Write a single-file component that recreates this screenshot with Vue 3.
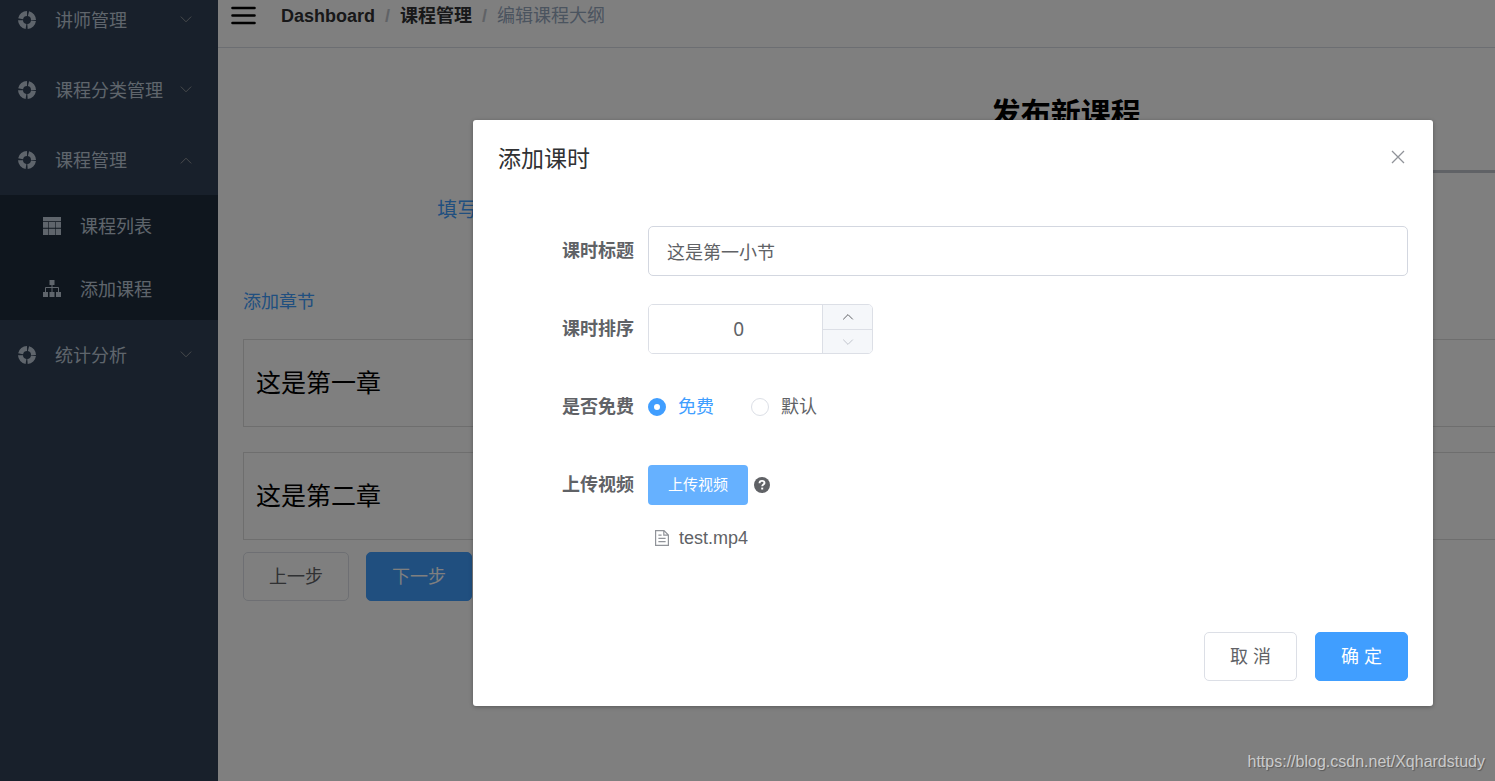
<script setup>
import { ref } from 'vue'

const topMenu = [
  { label: '讲师管理', open: false, children: [] },
  { label: '课程分类管理', open: false, children: [] },
  {
    label: '课程管理',
    open: true,
    children: [
      { label: '课程列表', icon: 'table' },
      { label: '添加课程', icon: 'tree' },
    ],
  },
  { label: '统计分析', open: false, children: [] },
]
const steps = [
  { id: 1, title: '填写课程基本信息', done: true },
  { id: 2, title: '', done: true },
  { id: 3, title: '', done: false },
]
const chapters = ['这是第一章', '这是第二章']

const title = ref('这是第一小节')
const sort = ref(0)
const free = ref('free')
</script>

<template>
  <div class="viewport">
    <div class="page">
      <nav class="sidebar">
        <ul class="menu">
          <li v-for="item in topMenu" :key="item.label">
            <a href="#" class="menu-item">
              <svg class="menu-icon" viewBox="0 0 18 18" aria-hidden="true">
                <circle cx="9" cy="9" r="6.5" fill="none" stroke="currentColor" stroke-width="5" stroke-dasharray="8.61 1.6" stroke-dashoffset="-0.8" />
              </svg>
              <span class="menu-label">{{ item.label }}</span>
              <svg class="menu-arrow" :class="{ up: item.open }" viewBox="0 0 12 12" aria-hidden="true">
                <path d="M0.8 2.6 L6 7.8 L11.2 2.6" fill="none" stroke="currentColor" stroke-width="1" />
              </svg>
            </a>
            <ul v-if="item.children.length" class="submenu">
              <li v-for="child in item.children" :key="child.label">
                <a href="#" class="submenu-item">
                  <svg v-if="child.icon === 'table'" class="menu-icon" viewBox="0 0 18 18" aria-hidden="true">
                    <path fill="currentColor" d="M0 0h18v4.3H0zM0 5h5.4v5.8H0zM6 5h6v5.8H6zM12.6 5H18v5.8h-5.4zM0 11.8h5.4V18H0zM6 11.8h6V18H6zM12.6 11.8H18V18h-5.4z" />
                  </svg>
                  <svg v-else class="menu-icon" viewBox="0 0 18 18" aria-hidden="true">
                    <path fill="currentColor" d="M6.5 0h5v5h-5zM0 12h5v5H0zM6.5 12h5v5h-5zM13 12h5v5h-5z" />
                    <path fill="none" stroke="currentColor" d="M9 5v8M2.5 12V7.5h13V12" />
                  </svg>
                  <span class="menu-label">{{ child.label }}</span>
                </a>
              </li>
            </ul>
          </li>
        </ul>
      </nav>

      <div class="main">
        <header class="navbar">
          <button type="button" class="hamburger" aria-label="菜单">
            <svg viewBox="0 0 26 20" aria-hidden="true">
              <path d="M1.5 2h22M1.5 9.5h22M1.5 17h22" stroke="#000" stroke-width="2.6" stroke-linecap="round" />
            </svg>
          </button>
          <div class="breadcrumb">
            <a href="#">Dashboard</a>
            <span class="sep">/</span>
            <a href="#">课程管理</a>
            <span class="sep">/</span>
            <span class="current">编辑课程大纲</span>
          </div>
        </header>

        <main class="content">
          <h2>发布新课程</h2>
          <ol class="steps">
            <li v-for="step in steps" :key="step.id" :class="{ done: step.done }">
              <span class="step-head"><span class="step-dot"></span></span>
              <span class="step-title">{{ step.title }}</span>
            </li>
          </ol>
          <a href="#" class="add-chapter">添加章节</a>
          <ul class="chapters">
            <li v-for="chapter in chapters" :key="chapter">{{ chapter }}</li>
          </ul>
          <div class="actions">
            <button type="button" class="btn">上一步</button>
            <button type="button" class="btn primary">下一步</button>
          </div>
        </main>
      </div>
    </div>

    <div class="overlay">
      <section class="dialog" role="dialog" aria-labelledby="dialog-title">
        <header class="dialog-header">
          <span id="dialog-title" class="dialog-title">添加课时</span>
          <button type="button" class="close" aria-label="关闭">
            <svg viewBox="0 0 14 14" aria-hidden="true">
              <path d="M1 1L13 13M13 1L1 13" stroke="currentColor" stroke-width="1.3" />
            </svg>
          </button>
        </header>

        <form class="form" @submit.prevent>
          <div class="row">
            <label class="label" for="lesson-title">课时标题</label>
            <input id="lesson-title" v-model="title" class="text-input" type="text">
          </div>
          <div class="row">
            <label class="label" for="lesson-sort">课时排序</label>
            <div class="number">
              <input id="lesson-sort" v-model="sort" type="text" inputmode="numeric">
              <div class="number-controls">
                <button type="button" aria-label="增加" @click="sort++">
                  <svg viewBox="0 0 12 8" aria-hidden="true"><path d="M1.2 6.4L6 1.6l4.8 4.8" fill="none" stroke="currentColor" /></svg>
                </button>
                <button type="button" aria-label="减少" disabled>
                  <svg viewBox="0 0 12 8" aria-hidden="true"><path d="M1.2 1.6L6 6.4l4.8-4.8" fill="none" stroke="currentColor" /></svg>
                </button>
              </div>
            </div>
          </div>
          <div class="row">
            <span class="label">是否免费</span>
            <div class="radios">
              <label class="radio"><input v-model="free" type="radio" name="free" value="free"><span>免费</span></label>
              <label class="radio"><input v-model="free" type="radio" name="free" value="default"><span>默认</span></label>
            </div>
          </div>
          <div class="row">
            <span class="label">上传视频</span>
            <div class="upload">
              <button type="button" class="upload-btn">上传视频</button>
              <svg class="question" viewBox="0 0 16 16" aria-hidden="true">
                <circle cx="8" cy="8" r="8" fill="#606266" />
                <path d="M5.5 6.3C5.5 4.6 6.6 3.9 8 3.9s2.5.8 2.5 2.1c0 1.6-2.3 1.6-2.3 3.3" fill="none" stroke="#fff" stroke-width="1.9" />
                <path d="M7.2 10.6h2v1.9h-2z" fill="#fff" />
              </svg>
            </div>
          </div>
          <a href="#" class="file">
            <svg viewBox="0 0 14 16" aria-hidden="true">
              <path d="M0.6 0.6H9L13.4 5V15.4H0.6zM8.8 0.8V5.2H13.2M3.4 5.2H6.6M3.4 8.4H10.6M3.4 11.6H10.6" fill="none" stroke="currentColor" stroke-width="1.2" />
            </svg>
            <span>test.mp4</span>
          </a>
        </form>

        <footer class="dialog-footer">
          <button type="button" class="btn">取 消</button>
          <button type="button" class="btn primary">确 定</button>
        </footer>
      </section>
    </div>

    <div class="watermark">https://blog.csdn.net/Xqhardstudy</div>
  </div>
</template>

<style>
body {
  margin: 0;
  overflow: hidden;
}
</style>

<style scoped>
.viewport,
.viewport * {
  box-sizing: border-box;
}

.viewport {
  position: relative;
  height: 100vh;
  overflow: hidden;
  background: #fff;
  font-family: "Liberation Sans", "Noto Sans CJK SC", sans-serif;
  font-size: 18px;
  line-height: 24px;
  color: #606266;
}

button,
input {
  font: inherit;
  color: inherit;
}

a {
  color: inherit;
  text-decoration: none;
}

ul,
ol {
  list-style: none;
  margin: 0;
  padding: 0;
}

svg {
  display: block;
}

/* The admin page is wider than the window and scrolled down slightly. */
.page {
  display: flex;
  width: 128vw;
  min-height: calc(100vh + 15px);
  margin-top: -15px;
}

.sidebar {
  flex: none;
  width: 218px;
  background: #304156;
  color: #bfcbd9;
}

.menu-item,
.submenu-item {
  display: flex;
  align-items: center;
}

.menu-item {
  height: 70px;
  padding: 0 26px 0 18px;
}

.menu-icon {
  width: 18px;
  height: 18px;
}

.menu-label {
  flex: 1;
  margin-left: 19px;
  padding-top: 2px;
}

.menu-arrow {
  width: 12px;
  height: 12px;
  color: #909399;
}

.menu-arrow.up {
  transform: rotate(180deg);
}

.submenu {
  display: grid;
  grid-auto-rows: 1fr;
  height: 125px;
  background: #1f2d3d;
}

.submenu-item {
  height: 100%;
  padding-left: 43px;
}

.main {
  flex: 1;
  min-width: 0;
}

.navbar {
  display: flex;
  align-items: center;
  gap: 24px;
  height: 63px;
  padding-left: 13px;
  border-bottom: 1px solid #d8dce5;
}

.hamburger {
  width: 26px;
  padding: 0;
  border: 0;
  background: none;
}

.breadcrumb {
  display: flex;
  gap: 10px;
  color: #97a8be;
}

.breadcrumb a {
  font-weight: 700;
  color: #303133;
}

.breadcrumb .sep {
  font-weight: 700;
  color: #c0c4cc;
}

.content {
  padding: 46px 25px 25px;
}

h2 {
  margin: 0;
  font-size: 30px;
  line-height: 40px;
  text-align: center;
  color: #000;
}

.steps {
  display: flex;
  margin-top: 22px;
  font-size: 20px;
  color: #c0c4cc;
}

.steps li {
  flex: 1;
  text-align: center;
}

.steps .done {
  color: #409eff;
}

.step-head {
  display: flex;
  justify-content: center;
  height: 31px;
  background: linear-gradient(#c0c4cc, #c0c4cc) center / 100% 3px no-repeat;
}

.steps li:first-child .step-head {
  background-size: 50% 3px;
  background-position: right center;
}

.steps li:last-child .step-head {
  background-size: 50% 3px;
  background-position: left center;
}

.step-dot {
  width: 31px;
  border: 2px solid;
  border-radius: 50%;
  background: #fff;
}

.step-title {
  display: block;
  line-height: 46px;
}

.add-chapter {
  display: block;
  width: fit-content;
  margin-top: 57px;
  color: #409eff;
}

.chapters {
  display: grid;
  gap: 25px;
  margin: 25px 0 12px;
}

.chapters li {
  padding: 24px 12px;
  border: 1px solid #ddd;
  font-size: 25px;
  line-height: 38px;
  color: #000;
}

.actions {
  display: flex;
  gap: 17px;
}

.btn {
  height: 49px;
  padding: 0 25px;
  border: 1px solid #dcdfe6;
  border-radius: 5px;
  background: #fff;
}

.btn.primary {
  border-color: #409eff;
  background: #409eff;
  color: #fff;
}

.overlay {
  position: absolute;
  top: 0;
  left: 0;
  width: 127.5vw;
  height: 100%;
  padding-top: 120px;
  background: rgba(0, 0, 0, 0.5);
}

.dialog {
  width: 960px;
  margin: 0 auto;
  border-radius: 3px;
  background: #fff;
  box-shadow: 0 1px 4px rgba(0, 0, 0, 0.3);
}

.dialog-header {
  display: flex;
  align-items: center;
  justify-content: space-between;
  padding: 24px 28px 12px 25px;
}

.dialog-title {
  font-size: 23px;
  line-height: 30px;
  color: #303133;
}

.close {
  padding: 0 0 4px;
  border: 0;
  background: none;
  color: #909399;
}

.close svg {
  width: 14px;
  height: 14px;
}

.form {
  display: grid;
  gap: 28px;
  padding: 40px 25px 39px;
}

.row {
  display: flex;
  align-items: center;
  height: 50px;
}

.label {
  flex: none;
  width: 150px;
  padding-right: 14px;
  font-weight: 700;
  text-align: right;
}

.text-input {
  flex: 1;
  min-width: 0;
  height: 50px;
  padding: 0 18px;
  border: 1px solid #d3d7e0;
  border-radius: 5px;
  background: #fff;
  outline: 0;
}

.number {
  display: flex;
  width: 225px;
  height: 50px;
  overflow: hidden;
  border: 1px solid #dcdfe6;
  border-radius: 5px;
}

.number input {
  flex: 1;
  min-width: 0;
  padding: 0 0 0 6px;
  border: 0;
  outline: 0;
  font-family: "Noto Sans", sans-serif;
  font-size: 19px;
  text-align: center;
}

.number-controls {
  display: grid;
  grid-template-rows: 1fr 1fr;
  width: 50px;
  border-left: 1px solid #dcdfe6;
}

.number-controls button {
  display: grid;
  place-items: center;
  padding: 0;
  border: 0;
  background: #f5f7fa;
  color: #606266;
}

.number-controls button + button {
  border-top: 1px solid #dcdfe6;
  color: #c0c4cc;
}

.number-controls svg {
  width: 12px;
  height: 8px;
}

.radios {
  display: flex;
  gap: 37px;
}

.radio {
  display: flex;
  align-items: center;
  gap: 12px;
}

.radio input {
  appearance: none;
  width: 18px;
  height: 18px;
  margin: 0;
  border: 1px solid #dcdfe6;
  border-radius: 50%;
  background: #fff;
}

.radio input:checked {
  border: 6px solid #409eff;
}

.radio input:checked + span {
  color: #409eff;
}

.upload {
  display: flex;
  align-items: center;
  gap: 6px;
}

.upload-btn {
  height: 40px;
  padding: 0 20px;
  border: 0;
  border-radius: 4px;
  background: #66b1ff;
  font-size: 15px;
  color: #fff;
}

.question {
  width: 16px;
  height: 16px;
}

.file {
  display: flex;
  align-items: center;
  gap: 10px;
  width: fit-content;
  margin: -12px 0 0 157px;
}

.file svg {
  width: 14px;
  height: 16px;
  color: #909399;
}

.dialog-footer {
  display: flex;
  justify-content: flex-end;
  gap: 18px;
  padding: 43px 25px 25px;
}

.watermark {
  position: absolute;
  right: 10px;
  bottom: 7px;
  font-size: 16px;
  color: rgba(255, 255, 255, 0.65);
  text-shadow: 1px 1px 1px rgba(0, 0, 0, 0.3);
}
</style>
